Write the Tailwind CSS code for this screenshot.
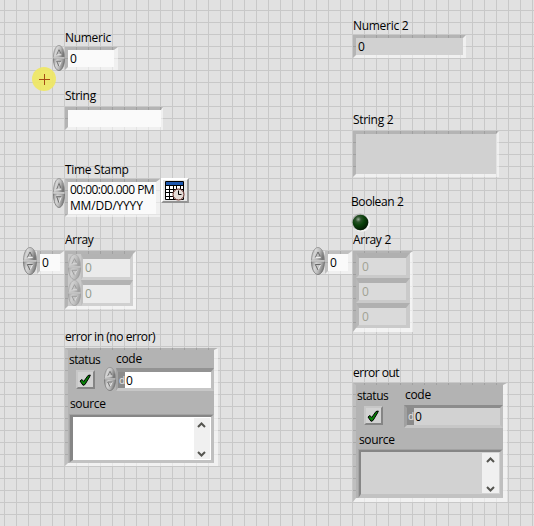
<!DOCTYPE html>
<html lang="en">
<head>
<meta charset="utf-8">
<title>Front Panel</title>
<script src="https://cdn.jsdelivr.net/npm/@tailwindcss/browser@4"></script>
</head>
<body class="overflow-hidden">
<svg class="absolute w-0 h-0">
  <defs>
    <linearGradient id="metal" x1="0" x2="1" y1="0" y2=".3"><stop offset="0" stop-color="#8e8e8e"/><stop offset=".35" stop-color="#d6d6d6"/><stop offset=".65" stop-color="#bcbcbc"/><stop offset="1" stop-color="#777"/></linearGradient>
    <radialGradient id="led" cx=".36" cy=".3" r=".7"><stop offset="0" stop-color="#93a893"/><stop offset=".25" stop-color="#2c522b"/><stop offset=".55" stop-color="#0a420b"/><stop offset="1" stop-color="#041b05"/></radialGradient>
    <symbol id="spin" viewBox="0 0 14 28" preserveAspectRatio="none">
      <path d="M7 .5C10.600 .5 13.500 6 13.500 13.300H.5C.5 6 3.400 .5 7 .5Z" fill="url(#metal)" stroke="#8b8b8b" stroke-width=".8"/>
      <path d="M.5 14.700H13.500C13.500 22 10.600 27.500 7 27.500S.5 22 .5 14.700Z" fill="url(#metal)" stroke="#707070" stroke-width=".8"/>
      <path d="M1 14H13" stroke="#e5e5e5"/>
      <path d="M9.700 10.500H4.300L7 5" stroke="#eee" fill="none"/><path d="M4.300 10.500 7 5 9 9" stroke="#666" fill="none"/>
      <path d="M7 23 9.700 17.500" stroke="#eee" fill="none"/><path d="M9.700 17.500H4.300L7 23" stroke="#666" fill="none"/>
    </symbol>
    <symbol id="check" viewBox="0 0 12 12"><path d="M1 7 3 5.500 4.700 7.500 9 1.500 11.300 1 10.500 3 6 10.500 4 11.300Z" fill="#078307" stroke="#000" stroke-width="1"/></symbol>
    <symbol id="up" viewBox="0 0 9 6"><path d="M1 5 4.500 1.500 8 5" fill="none" stroke="#555550" stroke-width="2"/></symbol>
    <symbol id="down" viewBox="0 0 9 6"><path d="M1 1 4.500 4.500 8 1" fill="none" stroke="#555550" stroke-width="2"/></symbol>
  </defs>
</svg>
<main class="relative w-[534px] h-[526px] overflow-hidden bg-[#e1e1e1] bg-[linear-gradient(to_right,#c8c8c8_1px,transparent_1px),linear-gradient(to_bottom,#c8c8c8_1px,transparent_1px)] bg-[size:12px_12px] bg-[position:4px_10px] font-['Open_Sans','Noto_Sans',sans-serif] text-[12px] leading-[16px] tracking-[-0.3px] text-black whitespace-nowrap">

  <!-- Numeric control -->
  <section class="absolute left-[53px] top-[30px] flex flex-col">
    <h2 class="pl-[12px] h-[15px]">Numeric</h2>
    <div class="flex">
      <svg class="w-[12px] h-[26px]"><use href="#spin"/></svg>
      <div class="mt-[2px] w-[53px] h-[23px] border-[3px] border-r-[4px] border-t-black/20 border-l-black/20 border-r-white/50 border-b-white/50 bg-[#fafafa] bg-clip-padding pl-[2px] leading-[17px]">0</div>
    </div>
  </section>

  <!-- Cursor highlight -->
  <svg class="absolute left-[32px] top-[67px] w-[24px] h-[24px]" viewBox="0 0 24 24"><circle cx="12" cy="12" r="12" fill="#efe861" fill-opacity=".9"/><path d="M7 12.500H18M12.500 7V18" stroke="#a64b14"/></svg>

  <!-- String control -->
  <section class="absolute left-[65px] top-[88px]">
    <h2 class="h-[19px]">String</h2>
    <div class="w-[98px] h-[23px] border-[3px] border-r-[2px] border-t-black/20 border-l-black/20 border-r-white/50 border-b-white/50 bg-[#fafafa] bg-clip-padding"></div>
  </section>

  <!-- Time stamp control -->
  <section class="absolute left-[53px] top-[162px]">
    <h2 class="pl-[12px] h-[16px]">Time Stamp</h2>
    <div class="flex items-start">
      <svg class="w-[12px] h-[30px]"><use href="#spin"/></svg>
      <div class="mt-px w-[95px] h-[38px] border-[3px] border-r-[4px] border-t-black/20 border-l-black/15 border-r-white/50 border-b-white/50 bg-[#fafafa] bg-clip-padding pl-[2px] tracking-[-0.55px]"><p class="h-[15px] leading-[15px]">00:00:00.000 PM</p><p class="h-[15px] leading-[17px] tracking-[-0.2px]">MM/DD/YYYY</p></div>
      <div class="ml-px w-[28px] h-[25px] border-[2px] border-t-white border-l-white border-r-[#9b9b9b] border-b-[#939393] bg-[#e6e6e6] flex items-center justify-center">
        <svg class="w-[20px] h-[20px]" viewBox="0 0 20 20"><path d="M.5 .5H18.500V18.500H.5Z" fill="#fff" stroke="#000"/><path d="M1 1H18V4H1Z" fill="#1b56ae"/><path d="M1 4.500H18M1 8.500H18M1 11.500H18M1 15.500H18M4.500 4V18M8.500 4V18M11.500 4V18M15.500 4V18" stroke="#000"/><circle cx="13.500" cy="13.500" r="5.500" fill="#e4dcd8" stroke="#6a2d26"/><path d="M13.500 9.500V13.500H16.500" fill="none" stroke="#000"/></svg>
      </div>
    </div>
  </section>

  <!-- Array control -->
  <section class="absolute left-[23px] top-[232px]">
    <h2 class="pl-[42px] h-[15px]">Array</h2>
    <div class="flex items-start">
      <svg class="w-[14px] h-[28px]"><use href="#spin"/></svg>
      <div class="mt-[4px] w-[27px] h-[23px] border-[3px] border-r-[4px] border-t-black/15 border-l-black/15 border-r-white/50 border-b-white/50 bg-[#fafafa] bg-clip-padding pl-[2px] leading-[17px]">0</div>
      <div class="ml-px mt-[4px] w-[71px] h-[58px] border-[3px] border-t-black/20 border-l-black/20 border-r-white/60 border-b-white/60 bg-[#c9c9c9] bg-clip-padding text-[#929a8b]">
        <div class="flex h-[26px]"><svg class="w-[13px] h-[26px] opacity-50"><use href="#spin"/></svg><div class="flex-1 border-[3px] border-t-[5px] border-l-[2px] border-t-[#b3b3b3] border-l-[#c0c0c0] border-r-[#d0d0d0] border-b-[#d0d0d0] bg-[#ebebeb] pl-[2px] leading-[17px]">0</div></div>
        <div class="flex h-[26px]"><svg class="w-[13px] h-[26px] opacity-50"><use href="#spin"/></svg><div class="flex-1 border-[3px] border-t-[5px] border-l-[2px] border-t-[#b3b3b3] border-l-[#c0c0c0] border-r-[#d0d0d0] border-b-[#d0d0d0] bg-[#ebebeb] pl-[2px] leading-[17px]">0</div></div>
      </div>
    </div>
  </section>

  <!-- Error in cluster -->
  <section class="absolute left-[65px] top-[329px]">
    <h2 class="h-[19px] tracking-[-0.45px]">error in (no error)</h2>
    <div class="w-[153px] h-[118px] border-[3px] border-t-[2px] border-r-[4px] border-t-black/20 border-l-black/15 border-r-white/55 border-b-white/55 bg-[#b3b3b3] bg-clip-padding">
      <div class="flex h-[42px]">
        <div class="w-[36px] pl-px pt-[2px]"><h3 class="tracking-[-0.45px]">status</h3>
          <div class="ml-[7px] mt-[2px] w-[19px] h-[19px] border-[2px] border-t-[#c7c7c7] border-l-[#c7c7c7] border-r-[#858585] border-b-[#858585] bg-[#d2d2d2] flex items-center justify-center"><svg class="-ml-px w-[12px] h-[12px]"><use href="#check"/></svg></div>
        </div>
        <div class="flex-1 pt-px"><h3 class="pl-[12px]">code</h3>
          <div class="flex"><svg class="w-[12px] h-[24px] shrink-0"><use href="#spin"/></svg>
            <div class="mt-px flex flex-1 h-[23px] border-[3px] border-t-[4px] border-l-[2px] border-t-[#939393] border-l-[#a5a5a5] border-r-[#bfbfbf] border-b-[#c7c7c7] bg-white leading-[17px]"><span class="w-[7px] bg-[#8b8b8b] text-[#e4e4e4] text-[10px] pl-px">d</span><span class="pl-px">0</span></div></div>
        </div>
      </div>
      <h3 class="pl-[2px] pt-[4px] h-[22px] tracking-[-0.35px]">source</h3>
      <div class="ml-px h-[49px] border border-t-[#a2a2a2] border-l-[#a5a5a5] border-r-[#bfbfbf] border-b-[#c2c2c2]"><div class="h-full border-[2px] border-l-[3px] border-t-[#868686] border-l-[#868686] border-r-[#bfbfbf] border-b-[#c2c2c2] bg-white flex justify-end">
        <div class="mr-px my-px w-[16px] bg-[#f0f0f0] flex flex-col justify-between items-center pt-[4px] pb-[2px]"><svg class="-ml-px w-[9px] h-[6px]"><use href="#up"/></svg><svg class="-ml-px w-[9px] h-[6px]"><use href="#down"/></svg></div>
      </div></div>
    </div>
  </section>

  <!-- Numeric indicator -->
  <section class="absolute left-[353px] top-[18px]">
    <h2 class="h-[17px]">Numeric 2</h2>
    <div class="w-[113px] h-[23px] border-[3px] border-t-black/20 border-l-black/20 border-r-white/50 border-b-white/50 bg-[#d1d1d1] bg-clip-padding pl-[2px] leading-[17px]">0</div>
  </section>

  <!-- String indicator -->
  <section class="absolute left-[353px] top-[112px]">
    <h2 class="h-[19px]">String 2</h2>
    <div class="w-[146px] h-[46px] border-[3px] border-t-black/20 border-l-black/20 border-r-white/50 border-b-white/50 bg-[#d1d1d1] bg-clip-padding"></div>
  </section>

  <!-- Boolean indicator -->
  <section class="absolute left-[351px] top-[194px]">
    <h2 class="h-[18px] tracking-[-0.4px]">Boolean 2</h2>
    <svg class="w-[20px] h-[20px]" viewBox="0 0 20 20"><circle cx="10.500" cy="11" r="8.800" fill="#f3f3f3"/><circle cx="9" cy="10" r="8.500" fill="#b5b5b5"/><circle cx="9.500" cy="10.500" r="7.800" fill="url(#led)"/></svg>
  </section>

  <!-- Array indicator -->
  <section class="absolute left-[311px] top-[232px]">
    <h2 class="pl-[42px] h-[15px]">Array 2</h2>
    <div class="flex items-start">
      <svg class="w-[14px] h-[28px]"><use href="#spin"/></svg>
      <div class="mt-[4px] w-[27px] h-[23px] border-[3px] border-r-[4px] border-t-black/15 border-l-black/15 border-r-white/50 border-b-white/50 bg-[#fafafa] bg-clip-padding pl-[2px] leading-[17px]">0</div>
      <div class="ml-px mt-[4px] w-[60px] h-[81px] border-[3px] border-t-[2px] border-b-[4px] border-t-black/20 border-l-black/20 border-r-white/60 border-b-white/60 bg-[#c9c9c9] bg-clip-padding text-[#a1a294]">
        <div class="h-[25px] border-[3px] border-r-[4px] border-t-[5px] border-t-[#b0b0b0] border-l-[#b8b8b8] border-r-[#cacaca] border-b-[#cacaca] bg-[#dadada] pl-[3px] leading-[17px]">0</div>
        <div class="h-[25px] border-[3px] border-r-[4px] border-t-[5px] border-t-[#b0b0b0] border-l-[#b8b8b8] border-r-[#cacaca] border-b-[#cacaca] bg-[#dadada] pl-[3px] leading-[17px]">0</div>
        <div class="h-[25px] border-[3px] border-r-[4px] border-t-[5px] border-t-[#b0b0b0] border-l-[#b8b8b8] border-r-[#cacaca] border-b-[#cacaca] bg-[#dadada] pl-[3px] leading-[17px]">0</div>
      </div>
    </div>
  </section>

  <!-- Error out cluster -->
  <section class="absolute left-[353px] top-[365px]">
    <h2 class="h-[18px] tracking-[-0.5px]">error out</h2>
    <div class="w-[154px] h-[119px] border-[3px] border-t-[2px] border-r-[4px] border-b-[4px] border-t-black/20 border-l-black/15 border-r-white/55 border-b-white/55 bg-[#b3b3b3] bg-clip-padding">
      <div class="flex h-[43px]">
        <div class="w-[48px] pl-px pt-[3px]"><h3 class="tracking-[-0.45px]">status</h3>
          <div class="ml-[7px] mt-[2px] w-[19px] h-[19px] border-[2px] border-t-[#c7c7c7] border-l-[#c7c7c7] border-r-[#858585] border-b-[#858585] bg-[#d2d2d2] flex items-center justify-center"><svg class="-ml-px w-[12px] h-[12px]"><use href="#check"/></svg></div>
        </div>
        <div class="flex-1 pt-[2px]"><h3 class="pl-px h-[18px]">code</h3>
          <div class="flex h-[23px] border-[3px] border-t-[#8c8c8c] border-l-[#a0a0a0] border-r-[#bfbfbf] border-b-[#c7c7c7] bg-[#d2d2d2] leading-[17px]"><span class="w-[7px] bg-[#8b8b8b] text-[#e4e4e4] text-[10px] pl-px">d</span><span class="pl-px">0</span></div>
        </div>
      </div>
      <h3 class="pl-[3px] pt-[4px] h-[21px] tracking-[-0.35px]">source</h3>
      <div class="ml-[2px] h-[49px] border border-t-[#a2a2a2] border-l-[#a5a5a5] border-r-[#bfbfbf] border-b-[#c2c2c2]"><div class="h-full border-[2px] border-b-[3px] border-t-[#868686] border-l-[#868686] border-r-[#bfbfbf] border-b-[#c2c2c2] bg-[#d2d2d2] flex justify-end">
        <div class="mr-px my-px w-[17px] bg-[#f0f0f0] flex flex-col justify-between items-center pt-[4px] pb-px"><svg class="-ml-px w-[9px] h-[6px]"><use href="#up"/></svg><svg class="-ml-px w-[9px] h-[6px]"><use href="#down"/></svg></div>
      </div></div>
    </div>
  </section>
</main>
</body>
</html>
